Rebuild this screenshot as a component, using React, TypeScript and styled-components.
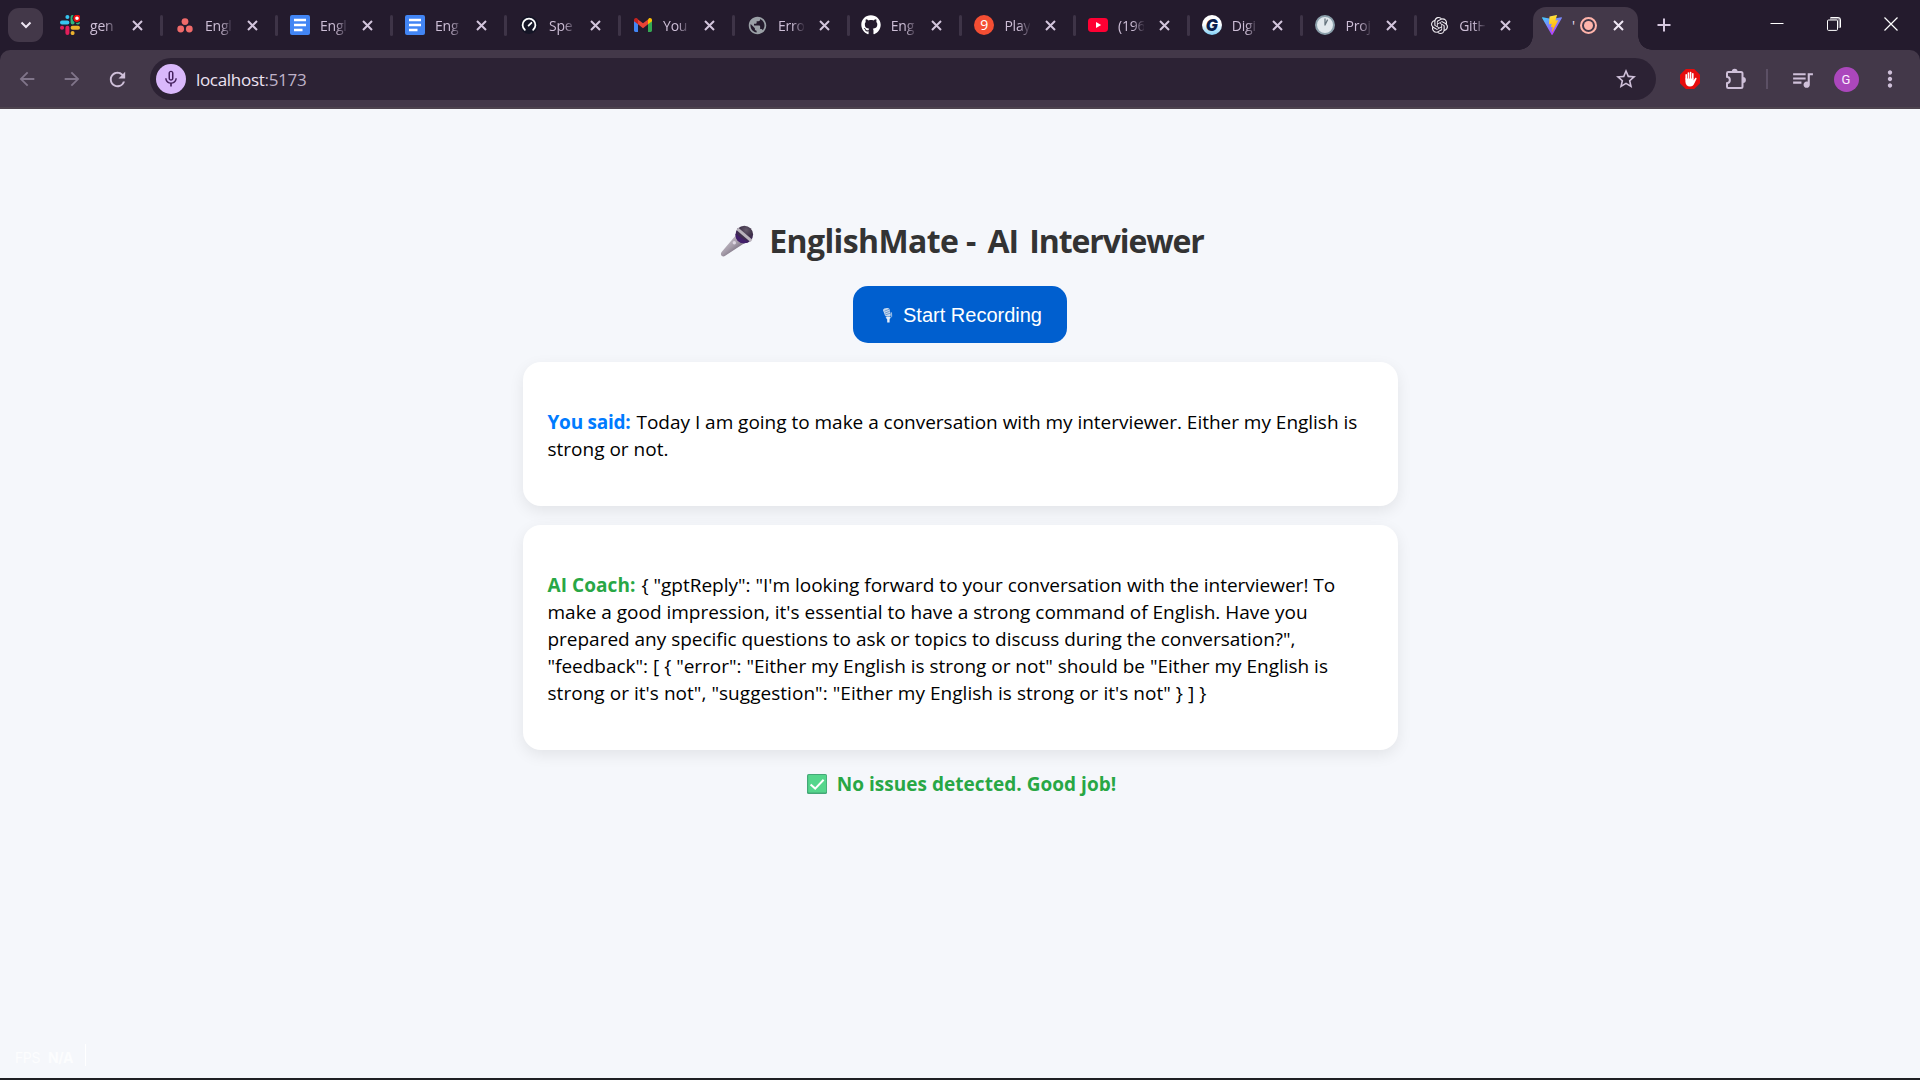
import React from 'react';
import styled, { createGlobalStyle } from 'styled-components';
import { FaGithub } from 'react-icons/fa';
import { SiOpenai } from 'react-icons/si';
import {
  MdArrowBack,
  MdArrowForward,
  MdMoreVert,
  MdMicNone,
  MdPublic,
  MdQueueMusic,
  MdRefresh,
  MdStarBorder,
} from 'react-icons/md';

const UI_FONT = '"Open Sans", "Noto Sans", sans-serif';
const FRAME = '#241b2d';
const CHROME = '#433849';
const ICON = '#cfc0d9';

const GlobalStyle = createGlobalStyle`
  * { box-sizing: border-box; }
  html, body { margin: 0; padding: 0; }
  body { background: #f5f7fb; font-family: ${UI_FONT}; overflow: hidden; }
  svg { display: block; flex: none; }
`;

const Screen = styled.div`
  width: 1920px;
  height: 1080px;
  display: flex;
  flex-direction: column;
  border-bottom: 2px solid #1f2024;
`;

/* ---------- tab strip ---------- */

const TabStrip = styled.div`
  height: 50px;
  flex: none;
  display: flex;
  background: ${FRAME};
`;

const TabSearch = styled.button`
  width: 35px;
  height: 34px;
  margin: 8px 17px 0 8px;
  padding: 0;
  border: 0;
  border-radius: 11px;
  background: ${CHROME};
  display: grid;
  place-items: center;
`;

const Tab = styled.div<{ $width: number }>`
  width: ${(p) => p.$width}px;
  height: 50px;
  flex: none;
  display: flex;
  align-items: center;
`;

const TabTitle = styled.span<{ $width: number }>`
  width: ${(p) => p.$width}px;
  margin-left: 10px;
  padding-top: 1px;
  overflow: hidden;
  white-space: nowrap;
  font-size: 14px;
  line-height: 20px;
  letter-spacing: -0.2px;
  color: #cdbed6;
  mask-image: linear-gradient(90deg, #000 55%, transparent 105%);
`;

const CloseSlot = styled.span`
  width: 11px;
  margin-left: 15px;
`;

const Separator = styled.span`
  width: 3px;
  height: 21px;
  margin-left: 17px;
  border-radius: 2px;
  background: #3e3447;
`;

const ActiveTab = styled.div`
  position: relative;
  width: 105px;
  height: 43px;
  margin: 7px 0 0 -10px;
  padding: 0 0 7px 9px;
  flex: none;
  display: flex;
  align-items: center;
  background: ${CHROME};
  border-radius: 13px 13px 0 0;

  &::before,
  &::after {
    content: '';
    position: absolute;
    bottom: 0;
    width: 14px;
    height: 14px;
  }
  &::before {
    right: 100%;
    background: radial-gradient(circle at 0 0, transparent 13.5px, ${CHROME} 14px);
  }
  &::after {
    left: 100%;
    background: radial-gradient(circle at 100% 0, transparent 13.5px, ${CHROME} 14px);
  }
`;

const ActiveTitle = styled.span`
  width: 4px;
  margin-left: 10px;
  padding-top: 1px;
  overflow: hidden;
  font-size: 14px;
  line-height: 20px;
  color: #e9dff0;
`;

const Recording = styled.span`
  width: 17px;
  height: 17px;
  margin-left: 4px;
  border: 2px solid #ffb4ab;
  border-radius: 50%;
  display: grid;
  place-items: center;

  &::after {
    content: '';
    width: 9px;
    height: 9px;
    border-radius: 50%;
    background: #ffb4ab;
  }
`;

const ActiveClose = styled.span`
  margin-left: 16px;
`;

const NewTab = styled.span`
  margin: 18px 0 0 19px;
`;

const WindowControls = styled.div`
  margin: 0 1px 0 auto;
  height: 48px;
  display: grid;
  grid-template-columns: repeat(3, 57px);
  place-items: center;
`;

/* ---------- toolbar ---------- */

const ToolbarBack = styled.div`
  height: 59px;
  flex: none;
  background: ${FRAME};
`;

const Toolbar = styled.div`
  height: 59px;
  display: flex;
  align-items: center;
  padding: 1px 13px 0 15px;
  background: ${CHROME};
  border-bottom: 2px solid #4d434e;
  border-radius: 10px 10px 0 0;
`;

const NavButton = styled.span<{ $dim?: boolean }>`
  width: 25px;
  margin-right: 20px;
  display: grid;
  place-items: center;
  color: ${(p) => (p.$dim ? '#80758a' : ICON)};
`;

const AddressBar = styled.div`
  width: 1507px;
  height: 42px;
  display: flex;
  align-items: center;
  padding: 0 18px 0 6px;
  border-radius: 21px;
  background: #2c2234;
`;

const MicBadge = styled.span`
  width: 30px;
  height: 30px;
  border-radius: 50%;
  display: grid;
  place-items: center;
  background: #d9b8fb;
  color: #45225f;
`;

const Url = styled.span`
  margin-left: 10px;
  padding-top: 1px;
  flex: 1;
  font-size: 17px;
  line-height: 24px;
  letter-spacing: -0.3px;
  color: #ece3f2;
`;

const Port = styled.span`
  color: #bfb2c9;
`;

const Actions = styled.div`
  flex: 1;
  display: grid;
  grid-template-columns: 67px 26px 36px 34px 54px 34px;
  justify-content: space-between;
  align-items: center;
  color: ${ICON};
`;

const ActionIcon = styled.span`
  display: grid;
  place-items: center;
`;

const Divider = styled.span`
  width: 2px;
  height: 20px;
  justify-self: center;
  background: #5c5065;
`;

const Avatar = styled.span`
  width: 25px;
  height: 25px;
  justify-self: center;
  border-radius: 50%;
  display: grid;
  place-items: center;
  background: #ab47bc;
  color: #fbeeff;
  font: 13px/25px Roboto, sans-serif;
`;

/* ---------- page ---------- */

const Page = styled.main`
  flex: 1;
  display: flex;
  flex-direction: column;
  align-items: center;
  padding-top: 110px;
`;

const Heading = styled.h1`
  height: 44px;
  margin: 0 0 23px;
  padding-left: 3px;
  display: flex;
  align-items: center;
  gap: 14px;
  font-size: 32px;
  line-height: 44px;
  letter-spacing: -0.6px;
  white-space: nowrap;
  color: #333;
`;

const HeadingTail = styled.span`
  margin-left: 4px;
  letter-spacing: -1.1px;
  word-spacing: 4px;
`;

const RecordButton = styled.button`
  width: 214px;
  height: 57px;
  padding: 1px 0 0 4px;
  border: 0;
  border-radius: 15px;
  display: flex;
  align-items: center;
  justify-content: center;
  gap: 10px;
  background: #005fcf;
  color: #fff;
  font: 20px/24px "Liberation Sans", Arial, sans-serif;
`;

const Card = styled.section`
  width: 875px;
  margin-top: 19px;
  padding: 47px 25px 43px;
  border-radius: 18px;
  background: #fff;
  box-shadow: 0 5px 15px rgba(0, 0, 0, 0.08);
`;

const Message = styled.p`
  margin: 0;
  font-size: 19px;
  line-height: 27px;
  color: #000;
`;

const Speaker = styled.strong<{ $color: string; $tracking: number }>`
  margin-right: 1px;
  color: ${(p) => p.$color};
  letter-spacing: ${(p) => p.$tracking}px;
`;

const Line = styled.span<{ $tracking?: number }>`
  white-space: nowrap;
  letter-spacing: ${(p) => p.$tracking ?? 0}px;
`;

const Verdict = styled.p`
  margin: 21px 0 0;
  padding-left: 3px;
  display: flex;
  align-items: center;
  gap: 10px;
  font-size: 19px;
  font-weight: 700;
  line-height: 27px;
  letter-spacing: 0.03px;
  color: #28a745;

  svg {
    margin-bottom: 1px;
  }
`;

const FpsOverlay = styled.div`
  align-self: flex-start;
  height: 22px;
  margin: auto 0 12px 15px;
  padding: 5px 12px 0 0;
  display: flex;
  align-items: center;
  gap: 8px;
  border-right: 1px solid #fff;
  color: rgba(255, 255, 255, 0.75);
  font: 14px/20px Inter, sans-serif;
  letter-spacing: -0.4px;
`;

/* ---------- drawings ---------- */

const CloseGlyph = ({ color = '#d3c5dc' }: { color?: string }) => (
  <svg width="11" height="11" viewBox="0 0 11 11">
    <path d="M1 1L10 10M10 1L1 10" stroke={color} strokeWidth="2" />
  </svg>
);

const SlackIcon = () => (
  <svg width="20" height="20" viewBox="0 0 20 20">
    <g strokeWidth="4" strokeLinecap="round">
      <path d="M7.4 2v.1M2 7.4h5.4" stroke="#36c5f0" />
      <path d="M12.6 2v5.4M17.8 7.4h.1" stroke="#2eb67d" />
      <path d="M12.6 12.7H18M12.6 18v.1" stroke="#ecb22e" />
      <path d="M7.4 12.7V18M2 12.7h.1" stroke="#e01e5a" />
    </g>
    <circle cx="17" cy="3.3" r="4.6" fill={FRAME} />
    <circle cx="17" cy="3.3" r="2.7" fill="#fff" stroke="#f00f0f" strokeWidth="1.8" />
  </svg>
);

const AsanaIcon = () => (
  <svg width="20" height="20" viewBox="0 0 20 20" fill="#f06a6a">
    <circle cx="10" cy="6.6" r="3.4" />
    <circle cx="5.7" cy="14" r="3.4" />
    <circle cx="14.3" cy="14" r="3.4" />
  </svg>
);

const DocsIcon = () => (
  <svg width="20" height="20" viewBox="0 0 20 20">
    <rect width="20" height="20" rx="2" fill="#4285f4" />
    <path d="M4 5h12M4 10h12M4 15h8.5" stroke="#fff" strokeWidth="2.3" />
  </svg>
);

const SpeedIcon = () => (
  <svg width="20" height="20" viewBox="0 0 20 20" fill="none" stroke="#fff" strokeLinecap="round">
    <circle cx="10" cy="10" r="9" fill="#141526" stroke="none" />
    <path d="M5.8 14.8A6.4 6.4 0 1 1 14.2 14.8" strokeWidth="1.8" />
    <path d="M9.6 10.6L12.4 7.8" strokeWidth="1.8" />
  </svg>
);

const GmailIcon = () => (
  <svg width="20" height="20" viewBox="0 0 20 20">
    <path d="M1 5v10.5c0 .8.6 1.4 1.4 1.4H5V8z" fill="#4285f4" />
    <path d="M19 5v10.5c0 .8-.6 1.4-1.4 1.4H15V8z" fill="#34a853" />
    <path d="M15 4.6V9.3l4-3V5c0-1.9-2-2.7-3.2-1.6z" fill="#fbbc04" />
    <path d="M5 4.4l5 3.9 5-3.9v4.9l-5 3.9-5-3.9z" fill="#ea4335" />
    <path d="M1 5v1.3l4 3V4L4.2 3.4C3 2.3 1 3.1 1 5z" fill="#c5221f" />
  </svg>
);

const NineIcon = styled.span`
  width: 20px;
  height: 20px;
  flex: none;
  border-radius: 50%;
  background: #f44e33;
  color: #fff;
  text-align: center;
  font: 14px/20px "Open Sans", sans-serif;
`;

const YouTubeIcon = () => (
  <svg width="20" height="20" viewBox="0 0 20 20">
    <rect y="3" width="20" height="14" rx="3.4" fill="#ff0033" />
    <path d="M8 7l5.2 3L8 13z" fill="#fff" />
  </svg>
);

const GradientG = styled.span`
  width: 20px;
  height: 20px;
  flex: none;
  border-radius: 50%;
  background: linear-gradient(#fff 45%, #7fd0f7);
  color: #0b1f4d;
  text-align: center;
  font: italic 900 16px/20px Inter, sans-serif;
`;

const ClockIcon = () => (
  <svg width="20" height="20" viewBox="0 0 20 20">
    <circle cx="10" cy="10" r="9" fill="#e1e8ed" stroke="#8ba0ab" strokeWidth="2" />
    <path d="M10 3.6V10l2.6-5.4" fill="none" stroke="#66757f" strokeWidth="1.3" strokeLinejoin="round" />
  </svg>
);

const OpenAiBox = styled.span`
  width: 20px;
  display: grid;
  place-items: center;
  color: #f1eef3;
`;

const ViteIcon = () => (
  <svg width="20" height="20" viewBox="0 0 20 20">
    <defs>
      <linearGradient id="viteBody" x1="0" y1="0" x2="0.6" y2="1">
        <stop offset="0" stopColor="#41d1ff" />
        <stop offset="1" stopColor="#bd34fe" />
      </linearGradient>
      <linearGradient id="viteBolt" x1="0.4" y1="0" x2="0.6" y2="1">
        <stop offset="0" stopColor="#ffea83" />
        <stop offset="0.1" stopColor="#ffdd35" />
        <stop offset="1" stopColor="#ffa800" />
      </linearGradient>
    </defs>
    <path d="M19.9 3L10.5 19.7c-.2.4-.7.4-.9 0L.1 3c-.2-.4.1-.8.6-.7L10 4l9.3-1.7c.5-.1.8.3.6.7z" fill="url(#viteBody)" />
    <path d="M14.6 0L7.7 1.4a.3.3 0 0 0-.2.3L7 8.9c0 .2.1.3.3.3l2-.5c.2 0 .3.1.3.3L9 12c0 .2.1.3.3.3l1.2-.4c.2 0 .4.1.3.3l-.9 4.4c-.1.3.3.4.4.2l.1-.2 5.700-11.100c.1-.2 0-.4-.3-.3l-2 .4c-.2 0-.3-.2-.3-.3L15 .3c0-.2-.1-.3-.4-.3z" fill="url(#viteBolt)" />
  </svg>
);

const AdBlockIcon = () => (
  <svg width="22" height="22" viewBox="0 0 22 22">
    <path d="M6.8 1h8.400L21 6.800v8.400L15.200 21H6.800L1 15.200V6.800z" fill="#e60c0c" />
    <path
      d="M6.400 10.500V13.500c0 3 1.900 5 4.600 5 2.300 0 3.500-1.300 4.300-3l2.200-4.500c.4-1-.9-1.600-1.500-.7l-1.500 2.200V10.500z"
      fill="#fff"
    />
    <path d="M7.200 11V6.800M9.400 10.500V5M11.600 10.500V4.600M13.800 11V5.800" stroke="#fff" strokeWidth="1.600" strokeLinecap="round" />
  </svg>
);

const PuzzleIcon = () => (
  <svg width="22" height="22" viewBox="0 0 22 22">
    <path
      d="M3.200 4H16c.9 0 1.500.6 1.500 1.500V18.500c0 .9-.6 1.500-1.500 1.500H3.200c-.7 0-1.200-.5-1.200-1.200V15.200c3.800-.4 3.800-6 0-6.400V5.200C2 4.500 2.500 4 3.200 4z"
      fill="none"
      stroke={ICON}
      strokeWidth="2"
    />
    <path d="M6.800 3.600a2.900 2.900 0 0 1 5.800 0zM18 9.100a2.900 2.900 0 0 1 0 5.800z" fill={ICON} />
  </svg>
);

const MicrophoneIcon = () => (
  <svg width="36" height="34" viewBox="0 0 36 34">
    <defs>
      <linearGradient id="micHandle" x1="0.25" y1="0.25" x2="0.75" y2="0.8">
        <stop offset="0" stopColor="#c3bcc6" />
        <stop offset="0.5" stopColor="#a39aa7" />
        <stop offset="1" stopColor="#6d6374" />
      </linearGradient>
      <radialGradient id="micHead" cx="0.6" cy="0.25" r="0.75">
        <stop offset="0" stopColor="#655a6b" />
        <stop offset="0.5" stopColor="#40334a" />
        <stop offset="1" stopColor="#3b1b60" />
      </radialGradient>
    </defs>
    <path d="M17.5 10.500L2.600 28c-1 1.400-1 2.800 0 3.800 1 .8 2.500.8 3.600 0L26 18.800z" fill="url(#micHandle)" />
    <circle cx="25.300" cy="10.500" r="8.800" fill="url(#micHead)" />
    <path d="M16.600 10.100c-.7 5 3.200 9.600 8.600 9.200 1.400-.2 2.600-.6 3.600-1.300z" fill="#43206b" />
    <path d="M18.400 4.800l14 12" stroke="#b9b3bc" strokeWidth="3" />
    <circle cx="15.300" cy="18.800" r="1.700" fill="#ddd6e1" />
  </svg>
);

const StudioMicIcon = () => (
  <svg width="11" height="16" viewBox="0 0 11 16">
    <path d="M1 3.2C1.2 1 7 .1 7.600 2.600L8.800 8c.2 1.600-5.200 2.400-5.800.6z" fill="#c5d8ee" />
    <path d="M2.400 4.200l5-2M2.800 6.200l5-2M3.200 8l5-1.800" stroke="#5a8cc8" strokeWidth="0.8" />
    <path d="M9.500 5.400l.2 4.200L7.200 12" stroke="#9fc0e6" fill="none" />
    <path d="M3.600 10.200l4.800-.7-.8 3L7.600 15.600H5.200V12.400z" fill="#e6eef8" />
  </svg>
);

const CheckBoxIcon = () => (
  <svg width="20" height="20" viewBox="0 0 20 20">
    <rect width="20" height="20" rx="1.6" fill="#44a877" />
    <rect x="1.2" y="1" width="18" height="17.6" rx="0.8" fill="#55d68c" />
    <path d="M3.600 10.400l4.600 4.200 8.400-8.800" fill="none" stroke="#fff" strokeWidth="2" />
  </svg>
);

const tabs: { title: string; icon: React.ReactNode; width: number }[] = [
  { title: 'gen', icon: <SlackIcon />, width: 115 },
  { title: 'Engl', icon: <AsanaIcon />, width: 115 },
  { title: 'Engl', icon: <DocsIcon />, width: 115 },
  { title: 'Eng', icon: <DocsIcon />, width: 114 },
  { title: 'Spe', icon: <SpeedIcon />, width: 114 },
  { title: 'You', icon: <GmailIcon />, width: 114 },
  { title: 'Erro', icon: <MdPublic size={21} color="#9aa0a6" />, width: 113.7 },
  { title: 'Eng', icon: <FaGithub size={20} color="#fff" />, width: 113.7 },
  { title: 'Play', icon: <NineIcon>9</NineIcon>, width: 113.7 },
  { title: '(196', icon: <YouTubeIcon />, width: 113.7 },
  { title: 'Digi', icon: <GradientG>G</GradientG>, width: 113.7 },
  { title: 'Proj', icon: <ClockIcon />, width: 113.7 },
  { title: 'GitH', icon: <OpenAiBox><SiOpenai size={17} /></OpenAiBox>, width: 113.8 },
];

const replyLines: { text: string; tracking?: number }[] = [
  { text: '{ "gptReply": "I\'m looking forward to your conversation with the interviewer! To', tracking: -0.01 },
  { text: "make a good impression, it's essential to have a strong command of English. Have you" },
  { text: 'prepared any specific questions to ask or topics to discuss during the conversation?",', tracking: -0.021 },
  { text: '"feedback": [ { "error": "Either my English is strong or not" should be "Either my English is', tracking: -0.015 },
  { text: 'strong or it\'s not", "suggestion": "Either my English is strong or it\'s not" } ] }', tracking: 0.04 },
];

export default function App() {
  return (
    <Screen>
      <GlobalStyle />
      <TabStrip>
        <TabSearch>
          <svg width="12" height="8" viewBox="0 0 12 8">
            <path d="M1.5 1.5L6 6l4.500-4.500" fill="none" stroke="#eee6f3" strokeWidth="2" />
          </svg>
        </TabSearch>
        {tabs.map((tab, i) => (
          <Tab key={i} $width={tab.width}>
            {tab.icon}
            <TabTitle $width={tab.width > 114 ? 27 : 25.700}>{tab.title}</TabTitle>
            <CloseSlot>
              <CloseGlyph />
            </CloseSlot>
            {i < tabs.length - 1 && <Separator />}
          </Tab>
        ))}
        <ActiveTab>
          <ViteIcon />
          <ActiveTitle>'</ActiveTitle>
          <Recording />
          <ActiveClose>
            <CloseGlyph color="#efe7f4" />
          </ActiveClose>
        </ActiveTab>
        <NewTab>
          <svg width="14" height="14" viewBox="0 0 14 14">
            <path d="M7 0.500v13M0.500 7h13" stroke="#d6c8df" strokeWidth="2" />
          </svg>
        </NewTab>
        <WindowControls>
          <svg width="14" height="14" viewBox="0 0 14 14">
            <path d="M0.500 6.500h13" stroke="#fff" />
          </svg>
          <svg width="14" height="14" viewBox="0 0 14 14" fill="none" stroke="#fff">
            <path d="M3 1.600h9.400V11" stroke="#8c8692" strokeWidth="2" />
            <path d="M3.500 0.500H11A2.500 2.500 0 0 1 13.500 3V10.500" />
            <rect x="0.500" y="3" width="10" height="10.400" rx="1" fill={FRAME} />
          </svg>
          <svg width="14" height="14" viewBox="0 0 14 14">
            <path d="M0.500 0.500l13 13M13.500 0.500l-13 13" stroke="#fff" strokeWidth="1.200" />
          </svg>
        </WindowControls>
      </TabStrip>

      <ToolbarBack>
        <Toolbar>
          <NavButton $dim>
            <MdArrowBack size={22} />
          </NavButton>
          <NavButton $dim>
            <MdArrowForward size={22} />
          </NavButton>
          <NavButton>
            <MdRefresh size={23} />
          </NavButton>
          <AddressBar>
            <MicBadge>
              <MdMicNone size={20} />
            </MicBadge>
            <Url>
              localhost<Port>:5173</Port>
            </Url>
            <MdStarBorder size={24} color={ICON} />
          </AddressBar>
          <Actions>
            <ActionIcon>
              <AdBlockIcon />
            </ActionIcon>
            <ActionIcon>
              <PuzzleIcon />
            </ActionIcon>
            <Divider />
            <ActionIcon>
              <MdQueueMusic size={25} />
            </ActionIcon>
            <Avatar>G</Avatar>
            <ActionIcon>
              <MdMoreVert size={26} />
            </ActionIcon>
          </Actions>
        </Toolbar>
      </ToolbarBack>

      <Page>
        <Heading>
          <MicrophoneIcon />
          <span>
            EnglishMate - <HeadingTail>AI Interviewer</HeadingTail>
          </span>
        </Heading>
        <RecordButton>
          <StudioMicIcon />
          Start Recording
        </RecordButton>
        <Card>
          <Message>
            <Speaker $color="#007bff" $tracking={-0.24}>You said:</Speaker>{' '}
            <Line $tracking={-0.02}>
              Today I am going to make a conversation with my interviewer. Either my English is
            </Line>
            <br />
            <Line>strong or not.</Line>
          </Message>
        </Card>
        <Card>
          <Message>
            <Speaker $color="#28a745" $tracking={0.07}>AI Coach:</Speaker>{' '}
            {replyLines.map((line, i) => (
              <React.Fragment key={i}>
                {i > 0 && <br />}
                <Line $tracking={line.tracking}>{line.text}</Line>
              </React.Fragment>
            ))}
          </Message>
        </Card>
        <Verdict>
          <CheckBoxIcon />
          No issues detected. Good job!
        </Verdict>
        <FpsOverlay>
          FPS <b>N/A</b>
        </FpsOverlay>
      </Page>
    </Screen>
  );
}
